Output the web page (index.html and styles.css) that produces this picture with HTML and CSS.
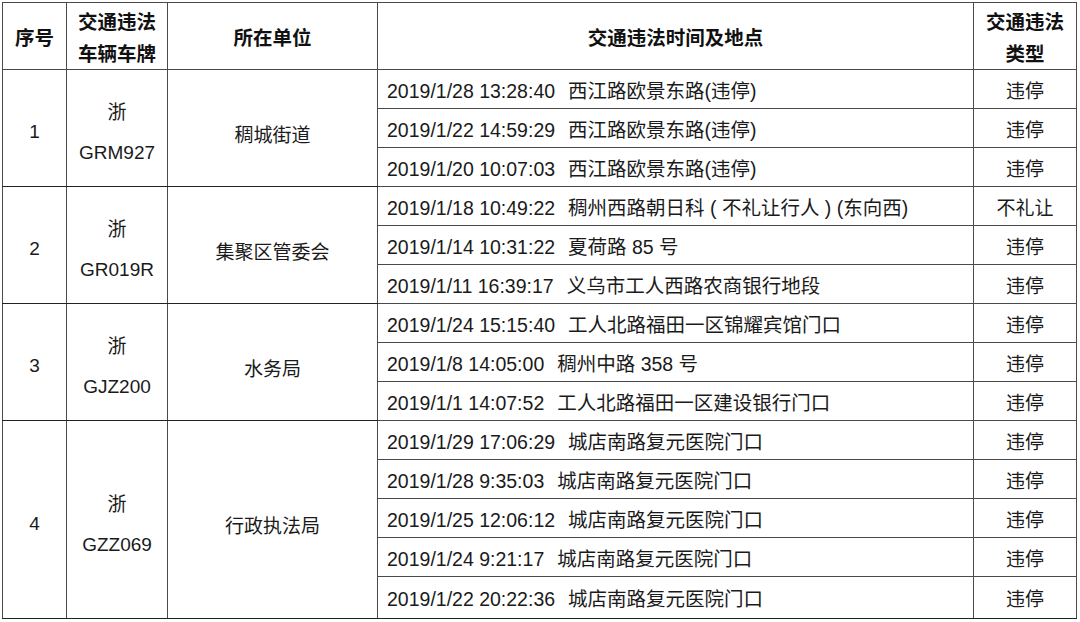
FILE: index.html
```html
<!DOCTYPE html>
<html lang="zh-CN">
<head>
<meta charset="utf-8">
<title>交通违法</title>
<link rel="stylesheet" href="styles.css">
</head>
<body>
<table class="tbl">
  <colgroup>
    <col class="c1"><col class="c2"><col class="c3"><col class="c4"><col class="c5">
  </colgroup>
  <thead>
    <tr class="hd">
      <th>序号</th>
      <th>交通违法<br>车辆车牌</th>
      <th>所在单位</th>
      <th>交通违法时间及地点</th>
      <th>交通违法<br>类型</th>
    </tr>
  </thead>
  <tbody>
    <tr class="r">
      <td rowspan="3" class="no">1</td>
      <td rowspan="3" class="plate">浙<br>GRM927</td>
      <td rowspan="3" class="unit">稠城街道</td>
      <td class="ev"><span class="t">2019/1/28 13:28:40</span><span class="loc">西江路欧景东路(违停)</span></td>
      <td class="ty">违停</td>
    </tr>
    <tr class="r">
      <td class="ev"><span class="t">2019/1/22 14:59:29</span><span class="loc">西江路欧景东路(违停)</span></td>
      <td class="ty">违停</td>
    </tr>
    <tr class="r">
      <td class="ev"><span class="t">2019/1/20 10:07:03</span><span class="loc">西江路欧景东路(违停)</span></td>
      <td class="ty">违停</td>
    </tr>
    <tr class="r">
      <td rowspan="3" class="no">2</td>
      <td rowspan="3" class="plate">浙<br>GR019R</td>
      <td rowspan="3" class="unit">集聚区管委会</td>
      <td class="ev"><span class="t">2019/1/18 10:49:22</span><span class="loc">稠州西路朝日科 ( 不礼让行人 ) (东向西)</span></td>
      <td class="ty">不礼让</td>
    </tr>
    <tr class="r">
      <td class="ev"><span class="t">2019/1/14 10:31:22</span><span class="loc">夏荷路 85 号</span></td>
      <td class="ty">违停</td>
    </tr>
    <tr class="r">
      <td class="ev"><span class="t">2019/1/11 16:39:17</span><span class="loc">义乌市工人西路农商银行地段</span></td>
      <td class="ty">违停</td>
    </tr>
    <tr class="r">
      <td rowspan="3" class="no">3</td>
      <td rowspan="3" class="plate">浙<br>GJZ200</td>
      <td rowspan="3" class="unit">水务局</td>
      <td class="ev"><span class="t">2019/1/24 15:15:40</span><span class="loc">工人北路福田一区锦耀宾馆门口</span></td>
      <td class="ty">违停</td>
    </tr>
    <tr class="r">
      <td class="ev"><span class="t">2019/1/8 14:05:00</span><span class="loc">稠州中路 358 号</span></td>
      <td class="ty">违停</td>
    </tr>
    <tr class="r">
      <td class="ev"><span class="t">2019/1/1 14:07:52</span><span class="loc">工人北路福田一区建设银行门口</span></td>
      <td class="ty">违停</td>
    </tr>
    <tr class="r">
      <td rowspan="5" class="no">4</td>
      <td rowspan="5" class="plate">浙<br>GZZ069</td>
      <td rowspan="5" class="unit">行政执法局</td>
      <td class="ev"><span class="t">2019/1/29 17:06:29</span><span class="loc">城店南路复元医院门口</span></td>
      <td class="ty">违停</td>
    </tr>
    <tr class="r">
      <td class="ev"><span class="t">2019/1/28 9:35:03</span><span class="loc">城店南路复元医院门口</span></td>
      <td class="ty">违停</td>
    </tr>
    <tr class="r">
      <td class="ev"><span class="t">2019/1/25 12:06:12</span><span class="loc">城店南路复元医院门口</span></td>
      <td class="ty">违停</td>
    </tr>
    <tr class="r">
      <td class="ev"><span class="t">2019/1/24 9:21:17</span><span class="loc">城店南路复元医院门口</span></td>
      <td class="ty">违停</td>
    </tr>
    <tr class="r last">
      <td class="ev"><span class="t">2019/1/22 20:22:36</span><span class="loc">城店南路复元医院门口</span></td>
      <td class="ty">违停</td>
    </tr>
  </tbody>
</table>
</body>
</html>
```

FILE: styles.css
```css
html, body {
  margin: 0;
  padding: 0;
  background: #ffffff;
}

body {
  padding: 2px 0 0 2px;
  font-family: "Liberation Sans", "Noto Sans CJK SC", sans-serif;
  color: #1a1a1a;
}

.tbl {
  border-collapse: collapse;
  table-layout: fixed;
  width: 1074px;
}

.c1 { width: 64px; }
.c2 { width: 101px; }
.c3 { width: 210px; }
.c4 { width: 596px; }
.c5 { width: 103px; }

.tbl th,
.tbl td {
  border: 1px solid #4a4a4a;
  padding: 0;
  vertical-align: middle;
}

.hd {
  height: 67px;
}

.hd th {
  font-family: "Noto Sans CJK SC", sans-serif;
  font-weight: 700;
  font-size: 19.5px;
  line-height: 32px;
  padding-top: 2px;
  color: #111;
  text-align: center;
}

.r {
  height: 39px;
}

.r.last {
  height: 42px;
}

.r td {
  font-size: 19px;
}

.no {
  text-align: center;
  padding-top: 8px !important;
}

.plate {
  text-align: center;
  line-height: 40px;
  padding-top: 10px !important;
}

.unit {
  text-align: center;
  padding-top: 10px !important;
}

.ev {
  padding-left: 9px !important;
  white-space: nowrap;
}

.ev .t {
  font-size: 19.5px;
  margin-right: 13px;
}

.ev .loc {
  font-size: 19.5px;
}

.ty {
  text-align: center;
}

.tbl tr.last td,
.tbl td.no,
.tbl td.plate,
.tbl td.unit {
  border-bottom-color: #222;
}
```
